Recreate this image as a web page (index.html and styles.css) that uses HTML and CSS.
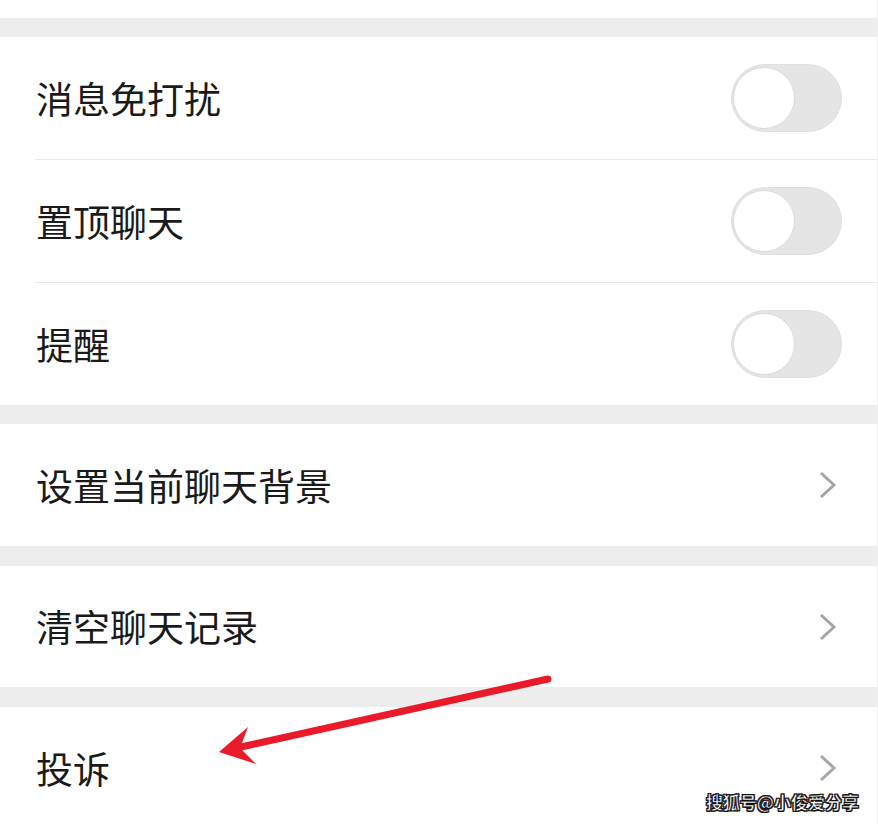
FILE: index.html
```html
<!DOCTYPE html>
<html lang="zh">
<head>
<meta charset="utf-8">
<link rel="stylesheet" href="styles.css">
</head>
<body>
<div class="page">
  <div class="top"></div>
  <div class="gap g1"></div>
  <div class="group">
    <div class="row"><span class="label">消息免打扰</span><span class="toggle"><span class="knob"></span></span></div>
    <div class="row"><span class="label">置顶聊天</span><span class="toggle"><span class="knob"></span></span></div>
    <div class="row"><span class="label">提醒</span><span class="toggle"><span class="knob"></span></span></div>
  </div>
  <div class="gap g1"></div>
  <div class="group">
    <div class="row"><span class="label">设置当前聊天背景</span><svg class="chev" viewBox="0 0 20 30"><polyline points="3,3 16,15 3,27"/></svg></div>
  </div>
  <div class="gap"></div>
  <div class="group">
    <div class="row short"><span class="label">清空聊天记录</span><svg class="chev" viewBox="0 0 20 30"><polyline points="3,3 16,15 3,27"/></svg></div>
  </div>
  <div class="gap"></div>
  <div class="group">
    <div class="row"><span class="label">投诉</span><svg class="chev" viewBox="0 0 20 30"><polyline points="3,3 16,15 3,27"/></svg></div>
  </div>

  <svg class="arrow" viewBox="0 0 878 824" width="878" height="824">
    <line x1="548" y1="679" x2="232" y2="749" />
    <polygon points="219,752 248,727 240,748 256,764" />
  </svg>
  <div class="watermark">搜狐号@小俊爱分享</div>
</div>
</body>
</html>
```

FILE: styles.css
```css
html, body {
  margin: 0;
  padding: 0;
  background: #ffffff;
}
.page {
  position: relative;
  width: 878px;
  height: 824px;
  overflow: hidden;
  font-family: "Noto Sans CJK SC", "Noto Sans", sans-serif;
  border-right: 1px solid #f0f0f0;
  box-sizing: border-box;
}
.top {
  height: 18px;
  background: #fff;
}
.gap {
  height: 20px;
  background: #ededed;
}
.gap.g1 {
  height: 19px;
}
.group {
  background: #fff;
}
.row {
  height: 122px;
  display: flex;
  align-items: center;
  justify-content: space-between;
  padding: 0 35px 0 36px;
  position: relative;
}
.row.short {
  height: 121px;
}
.row + .row::before {
  content: "";
  position: absolute;
  left: 35px;
  right: 0;
  top: -1px;
  height: 1px;
  background: #e9e9e9;
}
.row + .row {
  margin-top: 1px;
}
.label {
  font-size: 37px;
  color: #1a1a1a;
  letter-spacing: 0;
  line-height: 1;
}
.toggle {
  width: 111px;
  height: 68px;
  border-radius: 34px;
  background: #e5e5e5;
  box-sizing: border-box;
  border: 1px solid #e0e0e0;
  display: flex;
  align-items: center;
  padding-left: 1px;
}
.knob {
  width: 62px;
  height: 62px;
  border-radius: 50%;
  background: #fff;
  border: 1px solid #dcdcdc;
  box-sizing: border-box;
}
.chev {
  width: 20px;
  height: 30px;
  margin-right: 4px;
  fill: none;
  stroke: #a6a6a6;
  stroke-width: 3;
}
.arrow {
  position: absolute;
  left: 0;
  top: 0;
  pointer-events: none;
}
.arrow line {
  stroke: #ea1a2b;
  stroke-width: 7;
  stroke-linecap: round;
}
.arrow polygon {
  fill: #ea1a2b;
}
.watermark {
  position: absolute;
  right: 18px;
  bottom: 10px;
  font-family: "Noto Sans CJK SC", sans-serif;
  font-weight: 700;
  font-size: 17px;
  color: #fff;
  -webkit-text-stroke: 0.6px #111;
  text-shadow: 1px 1px 0 #111, -1px -1px 0 #111, 1px -1px 0 #111, -1px 1px 0 #111;
  letter-spacing: 0;
}
```
